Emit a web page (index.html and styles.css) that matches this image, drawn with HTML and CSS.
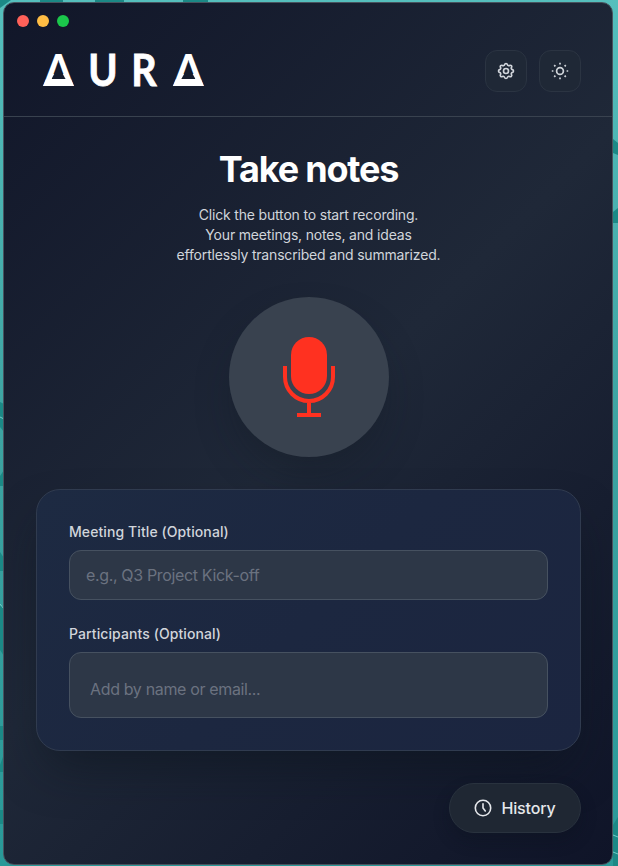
FILE: index.html
```html
<!DOCTYPE html>
<html lang="en">
<head>
<meta charset="utf-8">
<title>Aura</title>
<link rel="stylesheet" href="styles.css">
</head>
<body>
<svg class="wallpaper" viewBox="0 0 618 866" aria-hidden="true">
  <g fill="#1b8986">
    <path d="M0 0H11L0 8ZM40 0H63V3H40ZM95 0H124V3H95ZM183 0H208V3H183ZM613 139L618 143V155L613 153ZM613 212L618 208V223H613ZM0 402L4 404V432L0 427ZM0 476L4 470V486H0ZM0 552L4 558V571H0ZM0 606H4V656L0 650ZM0 726H4V740H0ZM0 765L4 754V772H0ZM0 810H4V824H0ZM613 825L618 817V866H613Z"/>
  </g>
  <path d="M0 417L4 419M0 604L4 609M613 835L618 837M613 852L618 854" stroke="#72cbc7" fill="none"/>
</svg>
<div class="window">
  <div class="traffic"><i class="close"></i><i class="minimize"></i><i class="expand"></i></div>
  <header class="topbar">
    <div class="logo"><span class="delta">A</span><span class="stem">U</span><span class="stem">R</span><span class="delta">A</span></div>
    <div class="tools">
      <button class="tool" aria-label="Settings">
        <svg width="20" height="20" viewBox="0 0 24 24" fill="none" stroke="currentColor" stroke-width="2" stroke-linejoin="round"><path d="M10.3 4.3C10.7 2.6 13.3 2.6 13.7 4.3A1.72 1.72 0 0 0 16.3 5.4C17.8 4.5 19.5 6.2 18.6 7.7A1.72 1.72 0 0 0 19.7 10.3C21.4 10.7 21.4 13.3 19.7 13.7A1.72 1.72 0 0 0 18.6 16.3C19.5 17.8 17.8 19.5 16.3 18.6A1.72 1.72 0 0 0 13.7 19.7C13.3 21.4 10.7 21.4 10.3 19.7A1.72 1.72 0 0 0 7.7 18.6C6.2 19.5 4.5 17.8 5.4 16.3A1.72 1.72 0 0 0 4.3 13.7C2.6 13.3 2.6 10.7 4.3 10.3A1.72 1.72 0 0 0 5.4 7.7C4.5 6.2 6.2 4.5 7.7 5.4A1.72 1.72 0 0 0 10.3 4.3Z"/><circle cx="12" cy="12" r="3"/></svg>
      </button>
      <button class="tool" aria-label="Theme">
        <svg width="18" height="18" viewBox="0 0 18 18" fill="none" stroke="currentColor" stroke-width="1.7"><circle cx="9" cy="9" r="3.4"/><path d="M9 .8V2.4M9 15.6V17.2M.8 9H2.4M15.6 9H17.2M3.2 3.2L4.4 4.4M13.6 13.6L14.8 14.8M3.2 14.8L4.4 13.6M13.6 4.4L14.8 3.2"/></svg>
      </button>
    </div>
  </header>
  <main>
    <h1>Take notes</h1>
    <p class="intro">Click the button to start recording.<br>Your meetings, notes, and ideas<br>effortlessly transcribed and summarized.</p>
    <button class="record" aria-label="Record">
      <svg width="54" height="80" viewBox="0 0 54 80"><rect x="9" width="36" height="57" rx="18" fill="#ff3120"/><path d="M3 29V40A24 24 0 0 0 51 40V29M27 64V78M15 78H39" fill="none" stroke="#ff3120" stroke-width="4"/></svg>
    </button>
    <form class="card">
      <label for="title">Meeting Title (Optional)</label>
      <input id="title" class="field" placeholder="e.g., Q3 Project Kick-off">
      <label for="people">Participants (Optional)</label>
      <input id="people" class="field people" placeholder="Add by name or email...">
    </form>
    <button class="history">
      <svg width="18" height="18" viewBox="0 0 18 18" fill="none" stroke="currentColor" stroke-width="1.6" stroke-linecap="round" stroke-linejoin="round"><circle cx="9" cy="9" r="7.7"/><path d="M9 4.8V9L11.3 12"/></svg>
      <span>History</span>
    </button>
  </main>
</div>
</body>
</html>
```
FILE: styles.css
```css
* { box-sizing: border-box; }
body {
  margin: 0;
  width: 618px;
  height: 866px;
  overflow: hidden;
  padding: 2px 5px 1px 3px;
  font-family: Inter, sans-serif;
  color: #d1d5db;
  background: linear-gradient(#55bfbd, #3da3a1 50%, #299998);
}
button { font: inherit; color: inherit; padding: 0; }
.wallpaper { position: absolute; left: 0; top: 0; width: 618px; height: 866px; }
.window {
  position: relative;
  height: 863px;
  width: 610px;
  border: 1px solid #49535e;
  border-radius: 11px;
  overflow: hidden;
  background: linear-gradient(135deg, #111629, #1f2838 50%, #0f1428);
}
.traffic { display: flex; gap: 8px; padding: 12px 0 0 13px; height: 24px; }
.traffic i { width: 12px; height: 12px; border-radius: 50%; }
.close { background: #ff6159; }
.minimize { background: #ffbd44; }
.expand { background: #1bc74b; }
.topbar {
  height: 90px;
  padding: 23px 31px 0 38px;
  display: flex;
  justify-content: space-between;
  align-items: flex-start;
  border-bottom: 1px solid #39424f;
}
.logo {
  display: grid;
  grid-template-columns: 33px 24px 24px 33px;
  column-gap: 16.3px;
  height: 42px;
  margin-top: -1px;
  font: 700 43px/42px Lato, sans-serif;
  color: #fff;
}
.logo span { position: relative; display: flex; justify-content: center; }
.stem { -webkit-text-stroke: .8px #fff; transform: scaleX(.92); }
.delta::before {
  content: "";
  position: absolute;
  left: 9.5px;
  top: 17px;
  width: 14px;
  height: 13px;
  background: #151c2d;
  clip-path: polygon(50% 0, 100% 100%, 0 100%);
}
.delta::after {
  content: "";
  position: absolute;
  left: 1px;
  right: 1px;
  bottom: 5px;
  height: 7px;
  background: #fff;
  clip-path: polygon(10% 0, 90% 0, 100% 100%, 0 100%);
}
.tools { display: flex; gap: 12px; }
.tool {
  width: 42px;
  height: 42px;
  display: grid;
  place-items: center;
  border: 1px solid #2b3442;
  border-radius: 12px;
  background: #1f2836;
}
main { display: flex; flex-direction: column; align-items: center; padding: 30px 31px 0 32px; }
h1 { margin: 0; color: #fff; font-size: 36px; line-height: 45px; font-weight: 700; letter-spacing: -1.2px; }
.intro { margin: 13px 0 0; text-align: center; font-size: 14px; line-height: 20px; letter-spacing: -.18px; }
.record {
  margin-top: 32px;
  width: 160px;
  height: 160px;
  flex: none;
  border: 0;
  border-radius: 50%;
  background: #39424f;
  display: grid;
  place-items: center;
  box-shadow: 0 20px 40px -8px rgba(17, 24, 32, .4);
}
.card {
  margin-top: 32px;
  width: 545px;
  height: 262px;
  padding: 32px;
  border: 1px solid #303b4f;
  border-radius: 24px;
  background: linear-gradient(135deg, #1d2a42, #1c2740 50%, #1b2540);
  box-shadow: 0 24px 48px -12px rgba(12, 20, 28, .6);
}
.card label { display: block; height: 20px; font-size: 14px; line-height: 20px; font-weight: 500; letter-spacing: .09px; }
.field {
  display: block;
  width: 100%;
  height: 50px;
  margin: 8px 0 24px;
  padding: 0 16px;
  border: 1px solid #465160;
  border-radius: 12px;
  background: #2d3747;
  font: 16px Inter, sans-serif;
  letter-spacing: -.35px;
  color: #d1d5db;
}
.field::placeholder { color: #6b7280; opacity: 1; }
.people { height: 66px; padding: 8px 20px 0; margin-bottom: 0; }
.history {
  align-self: flex-end;
  margin-top: 32px;
  width: 132px;
  height: 50px;
  border: 1px solid #29323e;
  border-radius: 25px;
  background: #1f2733;
  display: flex;
  align-items: center;
  justify-content: center;
  gap: 9px;
  color: #e5e7eb;
  font-size: 16px;
  font-weight: 500;
  letter-spacing: -.15px;
  box-shadow: 0 8px 16px rgba(10, 15, 25, .3);
}
```
